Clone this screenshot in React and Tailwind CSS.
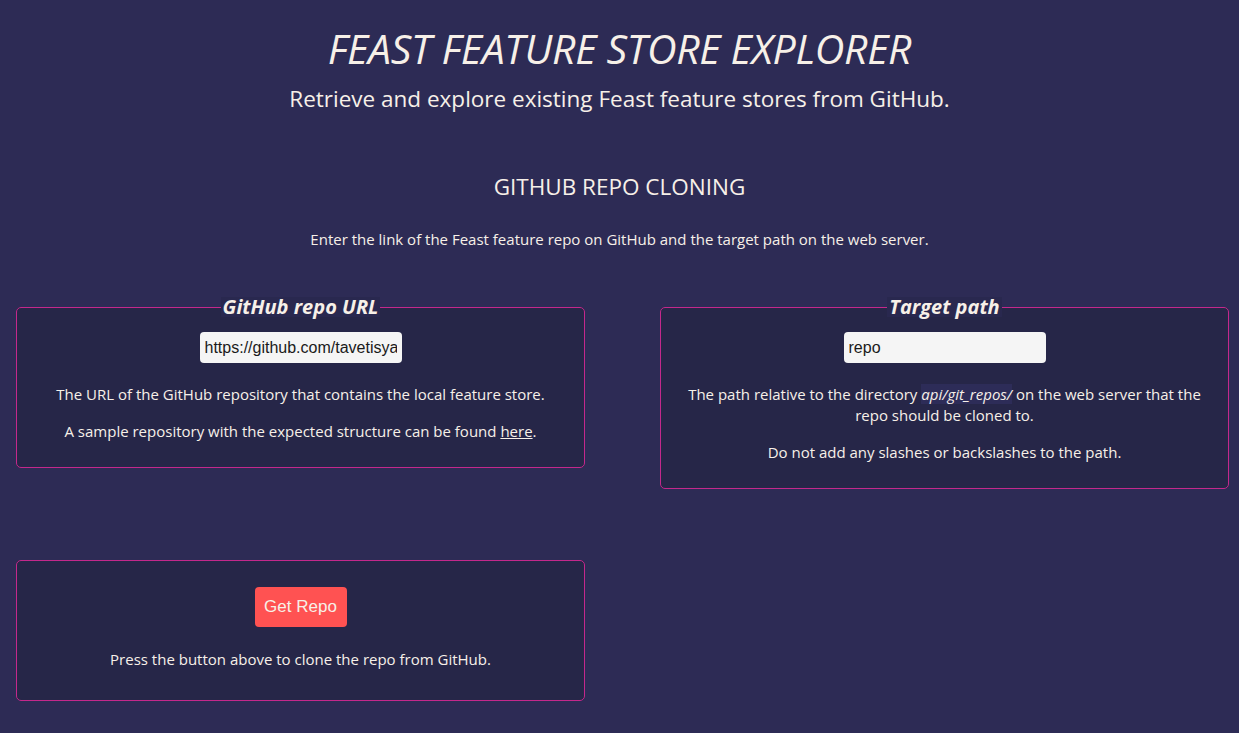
import React, { useState } from 'react';

const font = { fontFamily: '"Open Sans", "Noto Sans", sans-serif' };
const arial = { fontFamily: '"Liberation Sans", Arial, sans-serif' };

function Fieldset({ legend, className, children }) {
  return (
    <fieldset className={`w-[569px] rounded-[5px] border border-[#c4288c] bg-[#262648] px-4 pb-[25px] text-center ${className || ''}`}>
      {legend && (
        <legend className="mx-auto bg-[#29284f] px-[2px] text-[20px] font-bold italic leading-[20px] text-[#f7f0e8]">
          {legend}
        </legend>
      )}
      {children}
    </fieldset>
  );
}

export default function App() {
  const [repoUrl, setRepoUrl] = useState('https://github.com/tavetisyan/feast_feature_store');
  const [targetPath, setTargetPath] = useState('repo');

  return (
    <div className="min-h-[733px] w-full bg-[#2d2b55] text-[#f7f0e8]" style={font}>
      <header className="pt-[22px] text-center">
        <h1 className="text-[41px] font-normal italic leading-[52px] tracking-[-0.3px]">FEAST FEATURE STORE EXPLORER</h1>
        <p className="mt-[10px] text-[22.5px] leading-[30px]">Retrieve and explore existing Feast feature stores from GitHub.</p>
      </header>

      <section className="mt-[58px] text-center">
        <h2 className="text-[22.5px] leading-[30px]">GITHUB REPO CLONING</h2>
        <p className="mt-[27px] text-[15px] leading-[20px]">
          Enter the link of the Feast feature repo on GitHub and the target path on the web server.
        </p>
      </section>

      <div className="mt-[48px] flex items-start gap-[75px] pl-[16px]">
        <Fieldset legend="GitHub repo URL">
          <input
            value={repoUrl}
            onChange={(e) => setRepoUrl(e.target.value)}
            className="mt-[15px] h-[31px] w-[202px] rounded-[4px] bg-[#f5f5f5] px-[5px] text-[16px] text-[#1a1a1a] outline-none"
            style={arial}
          />
          <p className="mt-[21px] text-[15px] leading-[21px]">
            The URL of the GitHub repository that contains the local feature store.
          </p>
          <p className="mt-[16px] text-[15px] leading-[21px]">
            A sample repository with the expected structure can be found{' '}
            <a href="#" className="underline">here</a>.
          </p>
        </Fieldset>

        <Fieldset legend="Target path">
          <input
            value={targetPath}
            onChange={(e) => setTargetPath(e.target.value)}
            className="mt-[15px] h-[31px] w-[202px] rounded-[4px] bg-[#f5f5f5] px-[5px] text-[16px] text-[#1a1a1a] outline-none"
            style={arial}
          />
          <p className="mx-auto mt-[21px] max-w-[530px] text-[15px] leading-[21px]">
            The path relative to the directory <em className="bg-[#2d2c58]">api/git_repos/</em> on the web server that the repo should be cloned to.
          </p>
          <p className="mt-[16px] text-[15px] leading-[21px]">
            Do not add any slashes or backslashes to the path.
          </p>
        </Fieldset>
      </div>

      <div className="mt-[71px] pl-[16px]">
        <Fieldset className="flex min-h-[141px] flex-col items-center pt-[26px]">
          <button className="h-[40px] w-[92px] rounded-[4px] bg-[#ff5252] text-[17px] text-[#f7f0e8]" style={arial}>
            Get Repo
          </button>
          <p className="mt-[22px] text-[15px] leading-[21px]">
            Press the button above to clone the repo from GitHub.
          </p>
        </Fieldset>
      </div>
    </div>
  );
}
